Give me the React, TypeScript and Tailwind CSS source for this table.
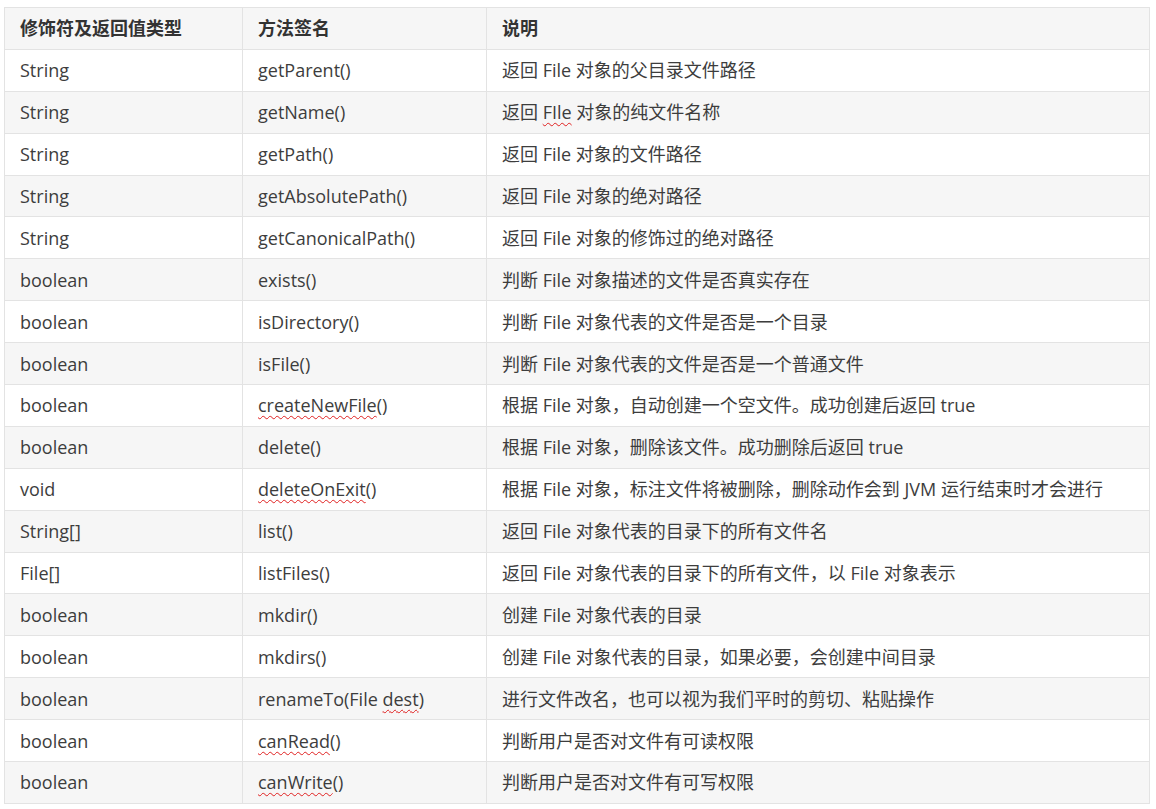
function Typo({ children }: { children: React.ReactNode }) {
  return (
    <span className="underline decoration-wavy decoration-[#e02020] decoration-1 underline-offset-[3px]">
      {children}
    </span>
  );
}

const data: [string, React.ReactNode, React.ReactNode][] = [
  ["String", "getParent()", "返回 File 对象的父目录文件路径"],
  ["String", "getName()", <>返回 <Typo>FIle</Typo> 对象的纯文件名称</>],
  ["String", "getPath()", "返回 File 对象的文件路径"],
  ["String", "getAbsolutePath()", "返回 File 对象的绝对路径"],
  ["String", "getCanonicalPath()", "返回 File 对象的修饰过的绝对路径"],
  ["boolean", "exists()", "判断 File 对象描述的文件是否真实存在"],
  ["boolean", "isDirectory()", "判断 File 对象代表的文件是否是一个目录"],
  ["boolean", "isFile()", "判断 File 对象代表的文件是否是一个普通文件"],
  ["boolean", <><Typo>createNewFile</Typo>()</>, "根据 File 对象，自动创建一个空文件。成功创建后返回 true"],
  ["boolean", "delete()", "根据 File 对象，删除该文件。成功删除后返回 true"],
  ["void", <><Typo>deleteOnExit</Typo>()</>, "根据 File 对象，标注文件将被删除，删除动作会到 JVM 运行结束时才会进行"],
  ["String[]", "list()", "返回 File 对象代表的目录下的所有文件名"],
  ["File[]", "listFiles()", "返回 File 对象代表的目录下的所有文件，以 File 对象表示"],
  ["boolean", "mkdir()", "创建 File 对象代表的目录"],
  ["boolean", "mkdirs()", "创建 File 对象代表的目录，如果必要，会创建中间目录"],
  ["boolean", <>renameTo(File <Typo>dest</Typo>)</>, "进行文件改名，也可以视为我们平时的剪切、粘贴操作"],
  ["boolean", <><Typo>canRead</Typo>()</>, "判断用户是否对文件有可读权限"],
  ["boolean", <><Typo>canWrite</Typo>()</>, "判断用户是否对文件有可写权限"],
];

export default function App() {
  return (
    <div
      className="min-h-[809px] bg-white pl-[4px] pt-[7px] text-[18px] leading-[24px] text-[#3d3d3d]"
      style={{ fontFamily: '"Open Sans", "Noto Sans CJK SC", sans-serif' }}
    >
      <table className="w-[1146px] table-fixed border-collapse">
        <colgroup>
          <col className="w-[238px]" />
          <col className="w-[244px]" />
          <col />
        </colgroup>
        <thead>
          <tr className="h-[41.9px] bg-[#f6f6f6]">
            {["修饰符及返回值类型", "方法签名", "说明"].map((h) => (
              <th
                key={h}
                className="border border-[#e3e3e3] px-[15px] py-0 text-left font-bold text-[#333]"
              >
                {h}
              </th>
            ))}
          </tr>
        </thead>
        <tbody>
          {data.map(([type, sig, desc], i) => (
            <tr key={i} className={i % 2 === 1 ? "h-[41.9px] bg-[#f6f6f6]" : "h-[41.9px] bg-white"}>
              <td className="border border-[#e3e3e3] px-[15px] py-0">{type}</td>
              <td className="border border-[#e3e3e3] px-[15px] py-0">{sig}</td>
              <td className="border border-[#e3e3e3] px-[15px] py-0 whitespace-nowrap">{desc}</td>
            </tr>
          ))}
        </tbody>
      </table>
    </div>
  );
}
